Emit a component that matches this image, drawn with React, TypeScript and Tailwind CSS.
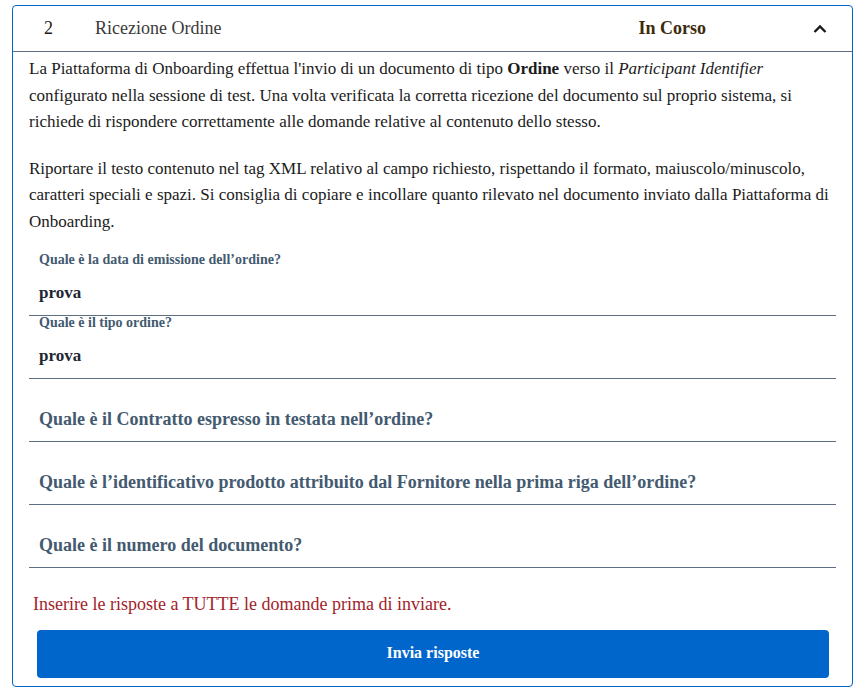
import React from 'react'

function Field({ label, value }: { label: string; value: string }) {
  return (
    <div className="mr-[16px] border-b border-[#5c6f82]">
      <div className="pl-[10px] text-[14px] leading-[14px] font-bold text-[#435a70]">{label}</div>
      <div className="h-[48px] pl-[10px] pt-[4px] flex items-center text-[17px] font-bold text-[#1c2733]">{value}</div>
    </div>
  )
}

function Question({ text }: { text: string }) {
  return (
    <div className="mr-[16px] h-[63px] border-b border-[#5c6f82] pl-[10px] pb-[12px] flex items-end">
      <span className="text-[18px] leading-[20px] font-bold text-[#435a70]">{text}</span>
    </div>
  )
}

export default function App() {
  return (
    <div className="min-h-screen bg-white pt-[5px] pl-[12px] pr-[15px] font-['Liberation_Serif','Times_New_Roman',serif]">
      <div className="w-[841px] h-[682px] border border-[#0066cc] rounded-[4px] flex flex-col">
        {/* Header */}
        <div className="h-[46px] flex items-center border-b border-[#5c6f82] text-[18px]">
          <div className="w-[82px] pl-[31px] text-[#1a1a1a]">2</div>
          <div className="flex-1 text-[#3a3a3a]">Ricezione Ordine</div>
          <div className="font-bold text-[#3d2a0a]">In Corso</div>
          <svg className="ml-[107px] mr-[25px]" width="14" height="10" viewBox="0 0 14 10" fill="none">
            <path d="M1.5 8 L7 2.5 L12.5 8" stroke="#1a1a1a" strokeWidth="2.4" />
          </svg>
        </div>

        {/* Body */}
        <div className="flex-1 flex flex-col pt-[4px] text-[17px] leading-[26.5px] text-[#1b1b1b]">
          <p className="pl-[16px] pr-[16px]">
            La Piattaforma di Onboarding effettua l'invio di un documento di tipo <b>Ordine</b> verso il{' '}
            <i>Participant Identifier</i> configurato nella sessione di test. Una volta verificata la corretta ricezione
            del documento sul proprio sistema, si richiede di rispondere correttamente alle domande relative al
            contenuto dello stesso.
          </p>
          <p className="pl-[16px] pr-[16px] mt-[20px]">
            Riportare il testo contenuto nel tag XML relativo al campo richiesto, rispettando il formato,
            maiuscolo/minuscolo, caratteri speciali e spazi. Si consiglia di copiare e incollare quanto rilevato nel
            documento inviato dalla Piattaforma di Onboarding.
          </p>

          <div className="ml-[16px] mt-[18px] leading-normal">
            <Field label="Quale è la data di emissione dell’ordine?" value="prova" />
            <Field label="Quale è il tipo ordine?" value="prova" />
            <Question text="Quale è il Contratto espresso in testata nell’ordine?" />
            <Question text="Quale è l’identificativo prodotto attribuito dal Fornitore nella prima riga dell’ordine?" />
            <Question text="Quale è il numero del documento?" />
          </div>

          <p className="pl-[20px] mt-[23px] text-[18px] text-[#a1232b]">
            Inserire le risposte a TUTTE le domande prima di inviare.
          </p>

          <button className="mt-[12px] ml-[24px] mr-[23px] h-[48px] rounded-[4px] bg-[#0066cc] text-white text-[16px] font-bold font-['Liberation_Serif','Times_New_Roman',serif]">
            Invia risposte
          </button>
        </div>
      </div>
    </div>
  )
}
